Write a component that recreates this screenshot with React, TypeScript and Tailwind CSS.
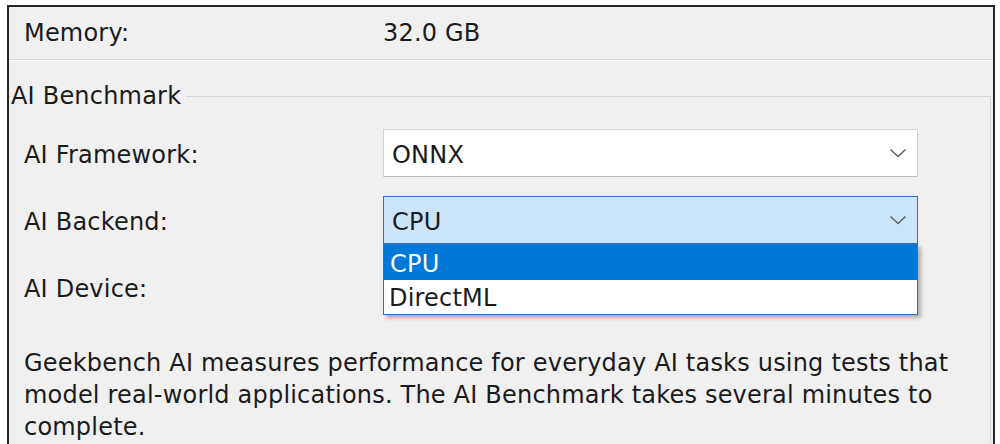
import React from "react";

function Chevron() {
  return (
    <svg width="18" height="10" viewBox="0 0 18 10" className="text-[#606060]">
      <path d="M1.5 1.5 L9 8.5 L16.5 1.5" fill="none" stroke="currentColor" strokeWidth="1.5" />
    </svg>
  );
}

function Row({ label, children }: { label: string; children?: React.ReactNode }) {
  return (
    <div className="flex h-[48px] items-center">
      <div className="w-[374px] pl-[15px] pt-[4px]">{label}</div>
      {children}
    </div>
  );
}

export default function App() {
  return (
    <div
      className="h-[444px] w-[1000px] overflow-hidden bg-white pl-[7px] pt-[5px] text-[24px] leading-[30px] tracking-[0.2px] text-[#1b1b1b]"
      style={{ fontFamily: '"DejaVu Sans", "Noto Sans", sans-serif' }}
    >
      <div className="h-[450px] w-[988px] border-2 border-b-0 border-[#262626] bg-[#f0f0f0]">
        {/* system info tail */}
        <div className="flex h-[52px] items-center">
          <div className="w-[374px] pl-[15px]">Memory:</div>
          <div>32.0 GB</div>
        </div>
        <div className="h-[2px] border-t border-[#d9d9d9] bg-[#fafafa]" />

        {/* AI Benchmark group */}
        <fieldset className="mr-[2px] mt-[20px] border-r border-t border-[#d6d6d6]">
          <legend className="ml-[2px] pr-[5px]">AI Benchmark</legend>
          <div className="flex flex-col gap-[19px] pt-[18px]">
            <Row label="AI Framework:">
              <div className="flex h-[48px] w-[535px] items-center justify-between border border-[#d2d2d2] border-b-[#bdbdbd] bg-white pl-[8px] pr-[10px]">
                <span className="pt-[3px]">ONNX</span>
                <Chevron />
              </div>
            </Row>
            <Row label="AI Backend:">
              <div className="relative w-[535px]">
                <div className="flex h-[48px] items-center justify-between border border-[#2f72c0] bg-[#cce4f7] pl-[8px] pr-[10px]">
                  <span className="pt-[3px]">CPU</span>
                  <Chevron />
                </div>
                <div className="absolute left-0 top-[48px] z-10 w-[535px] border border-[#2f72c0] bg-white shadow-[3px_3px_4px_rgba(0,0,0,0.28)]">
                  <div className="flex h-[35px] items-center bg-[#0078d7] pl-[6px] pt-[2px] text-white">CPU</div>
                  <div className="flex h-[34px] items-center pl-[5px] pt-[2px]">DirectML</div>
                </div>
              </div>
            </Row>
            <Row label="AI Device:" />
          </div>
          <p className="mt-[36px] w-[975px] pl-[15px] leading-[32px]">
            Geekbench AI measures performance for everyday AI tasks using tests that model
            real-world applications. The AI Benchmark takes several minutes to complete.
          </p>
        </fieldset>
      </div>
    </div>
  );
}
